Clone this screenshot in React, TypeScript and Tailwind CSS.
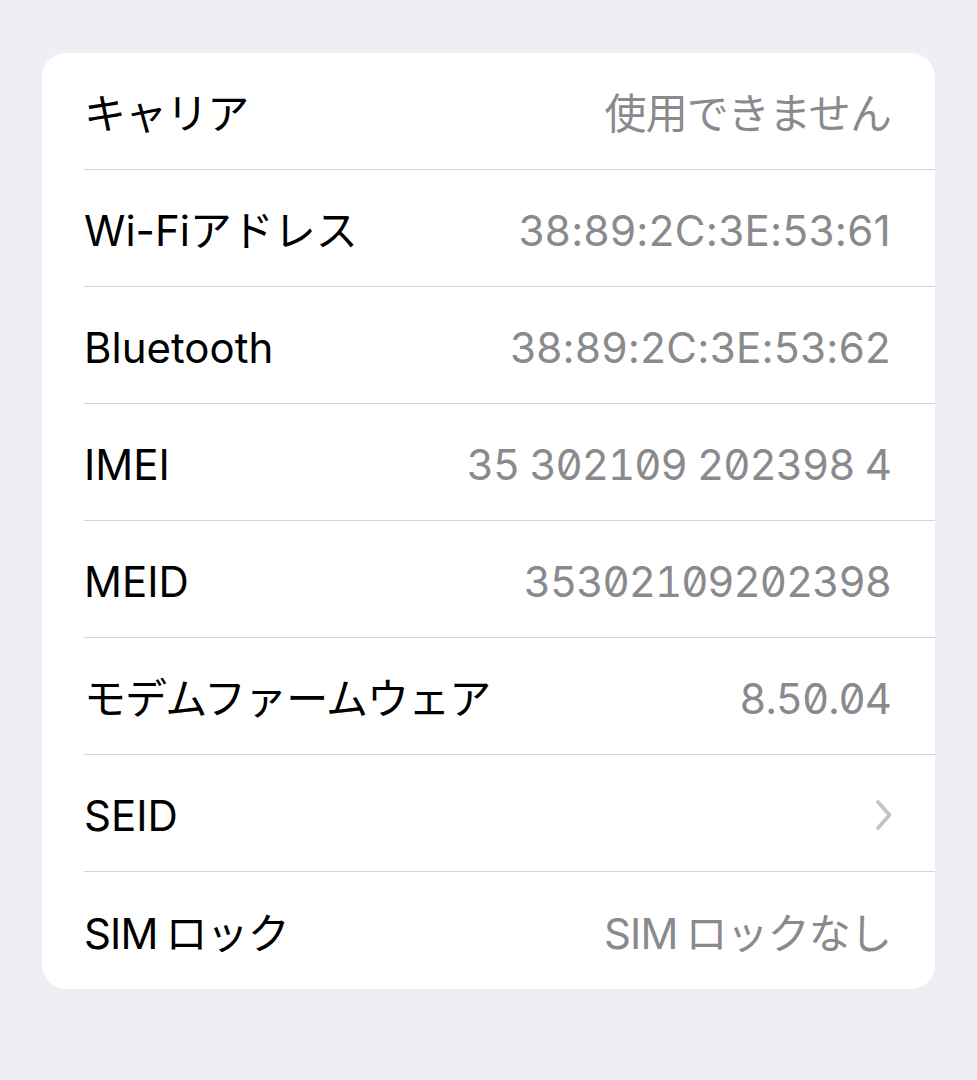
type Kind = "text" | "jp" | "mac" | "mono";

const rows: { label: string; lk: Kind; value?: string; vk?: Kind; chevron?: boolean }[] = [
  { label: "キャリア", lk: "jp", value: "使用できません", vk: "jp" },
  { label: "Wi-Fiアドレス", lk: "text", value: "38:89:2C:3E:53:61", vk: "mac" },
  { label: "Bluetooth", lk: "text", value: "38:89:2C:3E:53:62", vk: "mac" },
  { label: "IMEI", lk: "text", value: "35 302109 202398 4", vk: "mono" },
  { label: "MEID", lk: "text", value: "35302109202398", vk: "mono" },
  { label: "モデムファームウェア", lk: "jp", value: "8.50.04", vk: "mono" },
  { label: "SEID", lk: "text", chevron: true },
  { label: "SIMロック", lk: "jp", value: "SIMロックなし", vk: "jp" },
];

const track: Record<Kind, string> = {
  text: "tracking-[0px]",
  jp: "tracking-[-0.9px]",
  mac: "tracking-[0.35px]",
  mono: "tracking-[-1px] tabular-nums slashed-zero",
};

function Chevron() {
  return (
    <svg viewBox="0 0 18 32" className="h-[32px] w-[18px]" fill="none">
      <path d="M3 3l11.5 13L3 29" stroke="#c4c4c7" strokeWidth="3.8" strokeLinecap="round" strokeLinejoin="round" />
    </svg>
  );
}

// split "SIMロック" so the latin part gets the little gap seen in iOS
function Label({ text }: { text: string }) {
  if (text.startsWith("SIM")) {
    return (
      <>
        SIM<span className="ml-[8px]">{text.slice(3)}</span>
      </>
    );
  }
  return <>{text}</>;
}

export default function App() {
  return (
    <div className="min-h-[1080px] w-full bg-[#efeef4] pt-[53px] pl-[42px] pr-[42px] font-['Inter','Noto_Sans_CJK_JP',sans-serif]">
      <div className="overflow-hidden rounded-[24px] bg-white">
        {rows.map((r, i) => (
          <div key={r.label} className="pl-[42px]">
            <div
              className={
                "flex h-[117px] items-center justify-between pr-[44px] " +
                (i < rows.length - 1 ? "border-b border-[#d4d4d8]" : "")
              }
            >
              <span className={"pt-[5px] text-[42px] text-black " + track[r.lk]}>
                <Label text={r.label} />
              </span>
              {r.chevron ? (
                <span className="mr-[-2px] pt-[4px]">
                  <Chevron />
                </span>
              ) : (
                <span className={"pt-[5px] text-[42px] text-[#8a8a8e] " + track[r.vk ?? "text"]}>
                  <Label text={r.value ?? ""} />
                </span>
              )}
            </div>
          </div>
        ))}
      </div>
    </div>
  );
}
